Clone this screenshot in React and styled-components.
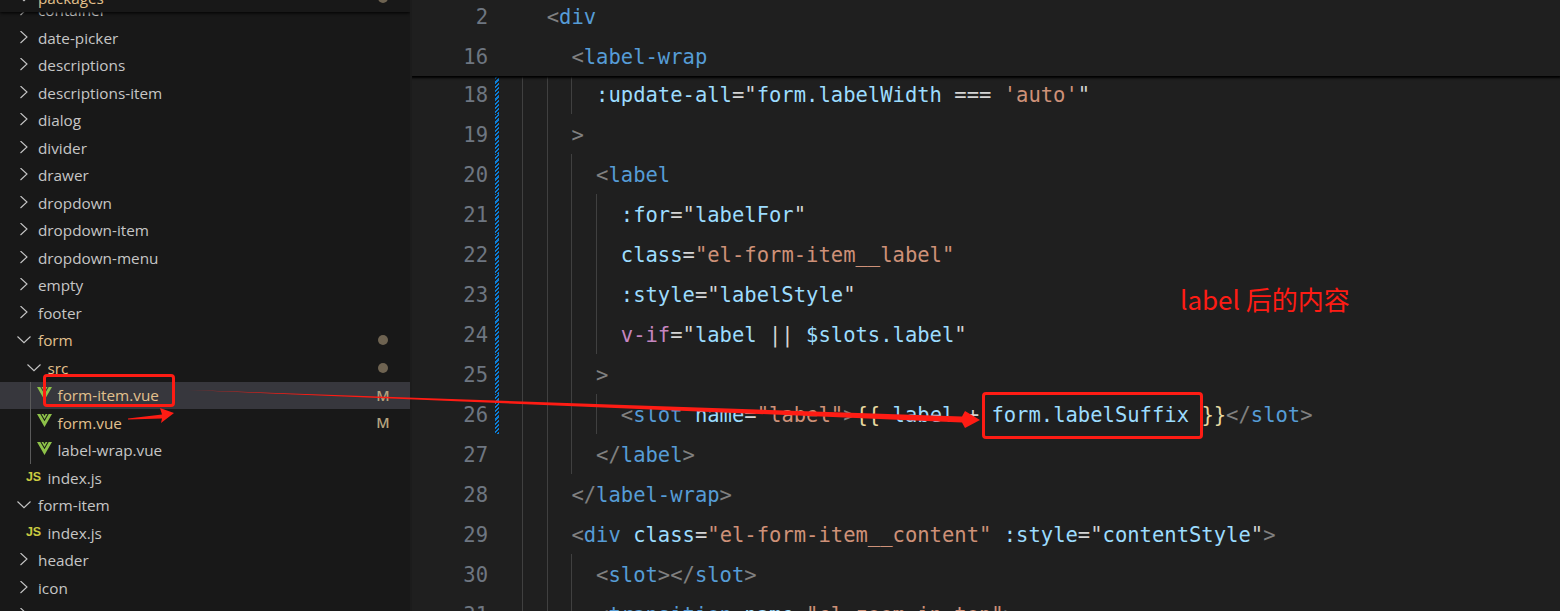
import React from 'react'
import styled, { createGlobalStyle } from 'styled-components'

const RED = '#fe1c14'

const Global = createGlobalStyle`
  html, body { margin: 0; padding: 0; background: #1f1f1f; }
  #root { width: 1560px; height: 611px; overflow: hidden; }
`

const Page = styled.div`
  position: relative;
  display: flex;
  width: 1560px;
  height: 611px;
  overflow: hidden;
`

/* ---- explorer ---- */
const Sidebar = styled.aside`
  width: 410px;
  flex: none;
  background: #181818;
  overflow: hidden;
  font-family: "Open Sans", "Noto Sans", sans-serif;
  font-size: 15.3px;
  color: #c6c6c6;
`
const Divider = styled.div`
  width: 2px;
  flex: none;
  background: #1c1c1c;
`
const PinnedRow = styled.div`
  position: relative;
  z-index: 2;
  height: 27.5px;
  margin-top: -16px;
  background: #181818;
  box-shadow: 0 1px 3px #000;
`
const Tree = styled.div`
  margin-top: -15px;
`
const Row = styled.div`
  display: flex;
  align-items: center;
  height: 27.5px;
  padding-left: ${p => 18 + p.$depth * 9.5}px;
  padding-right: 20px;
  color: ${p => (p.$modified ? '#e2c08d' : 'inherit')};
  background-color: ${p => (p.$selected ? '#37373d' : 'transparent')};
  background-image: ${p => (p.$guide ? 'linear-gradient(#5a5a5a, #5a5a5a)' : 'none')};
  background-size: 1px 100%;
  background-position: 30px 0;
  background-repeat: no-repeat;
`
const IconSlot = styled.span`
  display: flex;
  align-items: center;
  width: 20px;
  height: 100%;
  flex: none;
`
const Name = styled.span`
  flex: 1;
  white-space: nowrap;
  margin-left: ${p => (p.$file ? 0.5 : 0)}px;
`
const JsMark = styled.span`
  margin-left: -1.5px;
  font: bold 12.5px/1 "Liberation Sans", sans-serif;
  color: #cbcb41;
  letter-spacing: -0.3px;
  transform: translateY(-1px);
`
const Badge = styled.span`
  width: 14px;
  font-weight: 600;
  font-size: 14.5px;
  text-align: center;
  color: #b3a27e;
`
const Dot = styled.span`
  width: 10px;
  height: 10px;
  margin-right: 2px;
  border-radius: 50%;
  background: #6e6351;
`

const Chevron = ({ open }) => (
  <svg width="14" height="14" viewBox="0 0 14 14" fill="none" stroke="#c6c6c6" strokeWidth="1.1" style={{ marginLeft: -1 }}>
    <path d={open ? 'M0.5 4L7 10.2L13.5 4' : 'M4 1L10.5 7L4 13'} transform={open ? 'translate(0 -0.5)' : 'translate(-0.5 -1)'} />
  </svg>
)

const VueIcon = () => (
  <svg width="15" height="13" viewBox="0 0 15 13" style={{ marginTop: -4 }}>
    <path d="M0 0H3.3L7.5 7.3L11.7 0H15L7.5 13Z" fill="#8dc149" />
    <path d="M4.5 0H6.4L7.5 2L8.6 0H10.5L7.5 5.2Z" fill="#8dc149" />
  </svg>
)

const tree = [
  { name: 'container', kind: 'closed' },
  { name: 'date-picker', kind: 'closed' },
  { name: 'descriptions', kind: 'closed' },
  { name: 'descriptions-item', kind: 'closed' },
  { name: 'dialog', kind: 'closed' },
  { name: 'divider', kind: 'closed' },
  { name: 'drawer', kind: 'closed' },
  { name: 'dropdown', kind: 'closed' },
  { name: 'dropdown-item', kind: 'closed' },
  { name: 'dropdown-menu', kind: 'closed' },
  { name: 'empty', kind: 'closed' },
  { name: 'footer', kind: 'closed' },
  { name: 'form', kind: 'open', modified: true, dot: true },
  { name: 'src', kind: 'open', depth: 1, modified: true, dot: true },
  { name: 'form-item.vue', kind: 'vue', depth: 2, modified: true, badge: 'M', selected: true, guide: true },
  { name: 'form.vue', kind: 'vue', depth: 2, modified: true, badge: 'M', guide: true },
  { name: 'label-wrap.vue', kind: 'vue', depth: 2, guide: true },
  { name: 'index.js', kind: 'js', depth: 1 },
  { name: 'form-item', kind: 'open' },
  { name: 'index.js', kind: 'js', depth: 1 },
  { name: 'header', kind: 'closed' },
  { name: 'icon', kind: 'closed' },
  { name: 'input', kind: 'closed' },
]

const TreeRow = ({ item }) => (
  <Row $depth={item.depth || 0} $modified={item.modified} $selected={item.selected} $guide={item.guide}>
    <IconSlot>
      {item.kind === 'closed' && <Chevron />}
      {item.kind === 'open' && <Chevron open />}
      {item.kind === 'vue' && <VueIcon />}
      {item.kind === 'js' && <JsMark>JS</JsMark>}
    </IconSlot>
    <Name $file={item.kind === 'vue'}>{item.name}</Name>
    {item.badge && <Badge>{item.badge}</Badge>}
    {item.dot && <Dot />}
  </Row>
)

/* ---- editor ---- */
const Editor = styled.main`
  flex: 1;
  min-width: 0;
  overflow: hidden;
  background: #1f1f1f;
  font-family: "DejaVu Sans Mono", "Liberation Mono", monospace;
  font-size: 20.52px;
`
const StickyLines = styled.div`
  position: relative;
  z-index: 2;
  height: 80px;
  margin-top: -4px;
  background: #1f1f1f;
  box-shadow: 0 1px 2px 1px #000;
`
const Lines = styled.div`
  margin-top: -2px;
`
const Line = styled.div`
  display: flex;
  height: 40px;
  line-height: 42px;
  white-space: pre;
`
const LineNo = styled.span`
  width: 76px;
  flex: none;
  text-align: right;
  color: #6e7681;
`
const Marker = styled.span`
  width: 4px;
  flex: none;
  margin: 0 23px 0 7px;
  background: ${p => (p.$dirty ? 'repeating-linear-gradient(-45deg, #0c7dd6 0 1.5px, transparent 1.5px 3px)' : 'transparent')};
`
const Indent = styled.span`
  width: ${p => p.$level * 24.7}px;
  flex: none;
  background: ${p => (p.$guides ? 'repeating-linear-gradient(90deg, #404040 0 1px, transparent 1px 24.7px)' : 'none')};
`
const colours = {
  b: '#808080',
  t: '#569cd6',
  a: '#9cdcfe',
  s: '#ce9178',
  p: '#d4d4d4',
  v: '#c586c0',
  y: '#e8d9a0',
}
const Tok = styled.span`
  color: ${p => colours[p.$k]};
`

const code = [
  { n: 18, i: 3, d: 1, c: [['a', ':update-all'], ['p', '="'], ['a', 'form.labelWidth'], ['p', ' === '], ['s', "'auto'"], ['p', '"']] },
  { n: 19, i: 2, d: 1, c: [['b', '>']] },
  { n: 20, i: 3, d: 1, c: [['b', '<'], ['t', 'label']] },
  { n: 21, i: 4, d: 1, c: [['a', ':for'], ['p', '="'], ['a', 'labelFor'], ['p', '"']] },
  { n: 22, i: 4, d: 1, c: [['a', 'class'], ['p', '='], ['s', '"el-form-item__label"']] },
  { n: 23, i: 4, d: 1, c: [['a', ':style'], ['p', '="'], ['a', 'labelStyle'], ['p', '"']] },
  { n: 24, i: 4, d: 1, c: [['v', 'v-if'], ['p', '="'], ['a', 'label'], ['p', ' || '], ['a', '$slots.label'], ['p', '"']] },
  { n: 25, i: 3, d: 1, c: [['b', '>']] },
  { n: 26, i: 4, d: 1, c: [['b', '<'], ['t', 'slot'], ['p', ' '], ['a', 'name'], ['p', '='], ['s', '"label"'], ['b', '>'], ['y', '{{ '], ['a', 'label'], ['p', ' + '], ['a', 'form.labelSuffix'], ['y', ' }}'], ['b', '</'], ['t', 'slot'], ['b', '>']] },
  { n: 27, i: 3, c: [['b', '</'], ['t', 'label'], ['b', '>']] },
  { n: 28, i: 2, c: [['b', '</'], ['t', 'label-wrap'], ['b', '>']] },
  { n: 29, i: 2, c: [['b', '<'], ['t', 'div'], ['p', ' '], ['a', 'class'], ['p', '='], ['s', '"el-form-item__content"'], ['p', ' '], ['a', ':style'], ['p', '="'], ['a', 'contentStyle'], ['p', '"'], ['b', '>']] },
  { n: 30, i: 3, c: [['b', '<'], ['t', 'slot'], ['b', '></'], ['t', 'slot'], ['b', '>']] },
  { n: 31, i: 3, c: [['b', '<'], ['t', 'transition'], ['p', ' '], ['a', 'name'], ['p', '='], ['s', '"el-zoom-in-top"'], ['b', '>']] },
]

const CodeLine = ({ n, i, d, c, sticky }) => (
  <Line>
    <LineNo>{n}</LineNo>
    <Marker $dirty={d} />
    <Indent $level={i} $guides={!sticky} />
    <span>
      {c.map(([k, text], idx) => (
        <Tok key={idx} $k={k}>{text}</Tok>
      ))}
    </span>
  </Line>
)

/* ---- red annotations drawn over the screenshot ---- */
const Box = styled.div`
  position: absolute;
  z-index: 3;
  left: ${p => p.$x}px;
  top: ${p => p.$y}px;
  width: ${p => p.$w}px;
  height: ${p => p.$h}px;
  box-sizing: border-box;
  border: 3.5px solid ${RED};
  border-radius: 4px;
`
const Note = styled.div`
  position: absolute;
  z-index: 3;
  left: 1180px;
  top: 282px;
  font: 26px/34px "Noto Sans CJK SC", "Noto Sans", sans-serif;
  color: ${RED};
  white-space: nowrap;
`
const Arrows = styled.svg`
  position: absolute;
  z-index: 3;
  left: 0;
  top: 0;
`

export default function App() {
  return (
    <>
      <Global />
      <Page>
        <Sidebar>
          <PinnedRow>
            <TreeRow item={{ name: 'packages', kind: 'open', modified: true, dot: true }} />
          </PinnedRow>
          <Tree>
            {tree.map((item, i) => (
              <TreeRow key={i} item={item} />
            ))}
          </Tree>
        </Sidebar>
        <Divider />
        <Editor>
          <StickyLines>
            <CodeLine sticky n={2} i={1} c={[['b', '<'], ['t', 'div']]} />
            <CodeLine sticky n={16} i={2} c={[['b', '<'], ['t', 'label-wrap']]} />
          </StickyLines>
          <Lines>
            {code.map(line => (
              <CodeLine key={line.n} {...line} />
            ))}
          </Lines>
        </Editor>

        <Box $x={43} $y={374} $w={132} $h={33} />
        <Box $x={982} $y={392} $w={221} $h={47} />
        <Note>label 后的内容</Note>
        <Arrows width="1560" height="611" viewBox="0 0 1560 611">
          <path d="M188 390 L962 416.5 L965 411 L980 420 L965 428 L962 422.5 Z" fill={RED} />
          <path d="M128 418.5 L162 414.5 L160 408 L174 413 L161 423 L162 418.5 L128 419.5 Z" fill={RED} />
        </Arrows>
      </Page>
    </>
  )
}
